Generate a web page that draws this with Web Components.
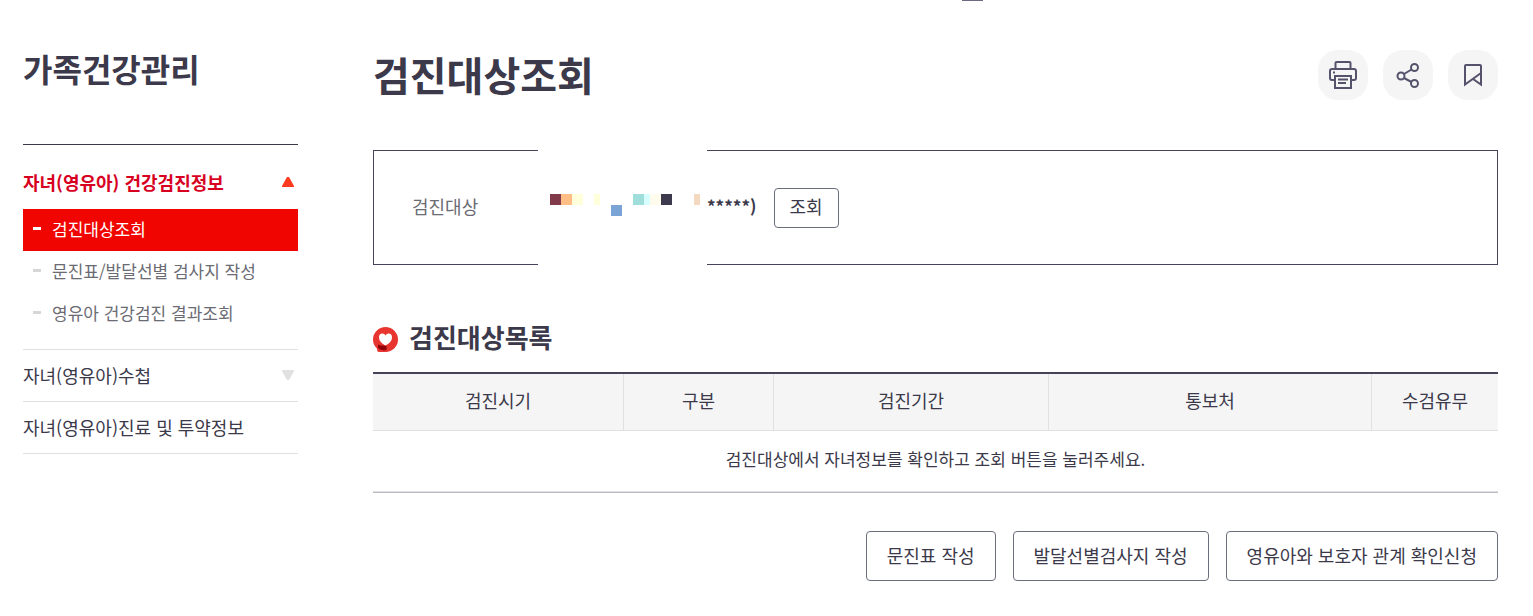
<!DOCTYPE html>
<html lang="ko">
<head>
<meta charset="utf-8">
<title>검진대상조회</title>
<style>
  body {
    margin: 0;
    background: #fff;
    color: #3b394a;
    font: 18px/28px "Noto Sans CJK KR", sans-serif;
  }
</style>
</head>
<body>
<health-page>
  <side-menu slot="side" heading="가족건강관리">
    <menu-group label="자녀(영유아) 건강검진정보" arrow="up" open>
      <menu-entry active>검진대상조회</menu-entry>
      <menu-entry>문진표/발달선별 검사지 작성</menu-entry>
      <menu-entry>영유아 건강검진 결과조회</menu-entry>
    </menu-group>
    <menu-group label="자녀(영유아)수첩" arrow="down"></menu-group>
    <menu-group label="자녀(영유아)진료 및 투약정보"></menu-group>
  </side-menu>

  <page-header>
    검진대상조회
    <tool-button slot="tools" label="인쇄">
      <svg width="50" height="50" fill="none" stroke="#55536b" stroke-width="2">
        <path d="M17.5 18v-5q0-1 1-1h13q1 0 1 1v5"/>
        <path d="M17 30h-3q-2 0-2-2v-7q0-2 2-2h22q2 0 2 2v7q0 2-2 2h-3"/>
        <path d="M17 26h16v12H17z"/>
        <path d="M15 22.5h2M20 29.5h10M20 33h8"/>
      </svg>
    </tool-button>
    <tool-button slot="tools" label="공유">
      <svg width="50" height="50" fill="none" stroke="#55536b" stroke-width="2">
        <circle cx="18" cy="26" r="3.5"/>
        <circle cx="31.5" cy="17.500" r="3.5"/>
        <circle cx="31.5" cy="33.500" r="3.5"/>
        <path d="M21 24l7.5-4.5M21 28l7.5 4"/>
      </svg>
    </tool-button>
    <tool-button slot="tools" label="즐겨찾기">
      <svg width="50" height="50" fill="none" stroke="#55536b" stroke-width="2">
        <path d="M33 23L17 34.5V16q0-1 1-1h14q1 0 1 1v18.5L25 29"/>
      </svg>
    </tool-button>
  </page-header>

  <target-search></target-search>
  <section-title>검진대상목록</section-title>
  <target-table></target-table>

  <button-row>
    <line-button>문진표 작성</line-button>
    <line-button>발달선별검사지 작성</line-button>
    <line-button>영유아와 보호자 관계 확인신청</line-button>
  </button-row>
</health-page>

<script>
function define(name, html, setup) {
  const template = document.createElement('template')
  template.innerHTML = html

  customElements.define(name,
    class extends HTMLElement {

      constructor() {
        super()
        this.attachShadow({ mode: 'open' })
          .appendChild(template.content.cloneNode(true))
        if (setup) setup(this, this.shadowRoot)
      }
    })
}

define('health-page', `
  <style>
    :host { display: block; }
    .handle {
      width: 21px;
      height: 1px;
      margin-left: 962px;
      background: #6c6a80;
    }
    .layout {
      display: flex;
      align-items: flex-start;
      gap: 75px;
      padding: 49px 35px 35px 23px;
    }
    aside { flex: 0 0 275px; }
    main { flex: 1; min-width: 0; }
  </style>
  <div class="handle"></div>
  <div class="layout">
    <aside><slot name="side"></slot></aside>
    <main><slot></slot></main>
  </div>
`)

define('side-menu', `
  <style>
    :host { display: block; }
    h2 {
      margin: 0 0 58px;
      font-size: 32px;
      line-height: 36px;
    }
    nav {
      border-top: 1px solid #3b394a;
    }
  </style>
  <h2></h2>
  <nav><slot></slot></nav>
`, (host, root) => {
  root.querySelector('h2').textContent = host.getAttribute('heading')
})

define('menu-group', `
  <style>
    :host {
      display: block;
      border-bottom: 1px solid #e0e0e0;
    }
    :host([open]) { padding: 12px 0 14px; }
    a {
      display: flex;
      align-items: center;
      justify-content: space-between;
      box-sizing: border-box;
      height: 51px;
      padding: 0 4px 2px 0;
      color: inherit;
      text-decoration: none;
    }
    :host([open]) a {
      height: 52px;
      color: #d8001f;
      font-weight: bold;
    }
    svg { display: none; }
    :host([arrow]) svg { display: block; fill: #e1e1e1; }
    :host([arrow=up]) svg { fill: #ff3a1e; transform: rotate(180deg); }
  </style>
  <a href="#"><span></span><svg width="12" height="10"><path d="M0 0h12v1L7 10H5L0 1z"/></svg></a>
  <slot></slot>
`, (host, root) => {
  root.querySelector('span').textContent = host.getAttribute('label')
})

define('menu-entry', `
  <style>
    :host { display: block; }
    a {
      display: flex;
      align-items: center;
      gap: 11px;
      box-sizing: border-box;
      height: 42px;
      padding: 0 0 3px 10px;
      color: #6b6b73;
      font-size: 17px;
      text-decoration: none;
    }
    a::before {
      content: '';
      width: 8px;
      height: 3px;
      background: #d6d6d6;
    }
    :host([active]) a { background: #f00500; color: #fff; }
    :host([active]) a::before { background: #fff; }
  </style>
  <a href="#"><slot></slot></a>
`)

define('page-header', `
  <style>
    :host {
      display: flex;
      align-items: flex-start;
      justify-content: space-between;
      height: 50px;
      margin-bottom: 50px;
    }
    h1 {
      margin: 0;
      font-size: 40px;
      line-height: 48px;
    }
    .tools { display: flex; gap: 15px; }
  </style>
  <h1><slot></slot></h1>
  <div class="tools"><slot name="tools"></slot></div>
`)

define('tool-button', `
  <style>
    :host { display: block; }
    button {
      display: block;
      width: 50px;
      height: 50px;
      padding: 0;
      border: 0;
      border-radius: 20px;
      background: #f5f5f5;
    }
    ::slotted(svg) { display: block; }
  </style>
  <button type="button"><slot></slot></button>
`, (host, root) => {
  root.querySelector('button').setAttribute('aria-label', host.getAttribute('label'))
})

define('line-button', `
  <style>
    :host { display: block; }
    button {
      display: block;
      height: var(--button-height, 50px);
      padding: 0 var(--button-padding, 20px) 3px;
      border: 1px solid #6b6e7d;
      border-radius: 4px;
      background: #fff;
      color: #3b394a;
      font: inherit;
      white-space: nowrap;
    }
  </style>
  <button type="button"><slot></slot></button>
`)

define('button-row', `
  <style>
    :host {
      display: flex;
      justify-content: flex-end;
      gap: 17px;
      margin-top: 38px;
    }
  </style>
  <slot></slot>
`)

define('target-search', `
  <style>
    :host {
      display: flex;
      align-items: center;
      box-sizing: border-box;
      min-height: 115px;
      padding-left: 38px;
      border: 1px solid #45435a;
    }
    .label, .value { padding-bottom: 4px; }
    .label { width: 126px; color: #6b6b73; }
    /* personal data is covered, box border included */
    .mask {
      align-self: stretch;
      display: flex;
      align-items: center;
      width: 169px;
      margin: -1px 0;
      background: #fff;
    }
    .value { margin-right: 17px; font-size: 17px; font-weight: bold; }
    line-button { --button-height: 40px; --button-padding: 15px; }
  </style>
  <span class="label">검진대상</span>
  <span class="mask">
    <svg width="169" height="29" shape-rendering="crispEdges">
      <path fill="#803a4a" d="M12 1h11v11H12z"/>
      <path fill="#ffbe85" d="M23 1h11v11H23z"/>
      <path fill="#ffffdc" d="M34 1h11v11H34zM56 1h6v11h-6z"/>
      <path fill="#7aa3d6" d="M73 12h11v11H73z"/>
      <path fill="#a0dedc" d="M95 1h11v11H95z"/>
      <path fill="#d8ffff" d="M106 1h6v11h-6z"/>
      <path fill="#fffcee" d="M112 1h11v11h-11z"/>
      <path fill="#3c3a4c" d="M123 1h11v11h-11z"/>
      <path fill="#f5d8c0" d="M156 1h6v11h-6z"/>
    </svg>
  </span>
  <span class="value">*****)</span>
  <line-button>조회</line-button>
`)

define('section-title', `
  <style>
    :host {
      display: flex;
      align-items: center;
      gap: 11px;
      height: 40px;
      margin: 54px 0 13px;
    }
    h3 {
      margin: 0;
      padding-bottom: 4px;
      font-size: 26px;
      line-height: 36px;
    }
  </style>
  <svg width="25" height="25">
    <circle cx="12.5" cy="12.5" r="12.5" fill="#e83530"/>
    <path d="M4 18.5h9.5V25H6q-2 0-2-3z" fill="#e83530"/>
    <path d="M5 17.5q4 2 8.5 1V23Q8 24 5 21z" fill="#8f0008"/>
    <path d="M12.5 18.500Q6 15 6 10.500q0-4 3.500-4 2 0 3 2 1-2 3-2 3.500 0 3.500 4 0 4.500-6.500 8z" fill="#fff"/>
  </svg>
  <h3><slot></slot></h3>
`)

define('target-table', `
  <style>
    :host { display: block; }
    table {
      width: 100%;
      border-top: 2px solid #45435a;
      border-bottom: 1px solid #b9bcc8;
      border-spacing: 0;
      table-layout: fixed;
      text-align: center;
    }
    th, td {
      box-sizing: border-box;
      padding: 0 0 4px;
      border-bottom: 1px solid #e0e0e0;
    }
    th {
      height: 57px;
      background: #f5f5f5;
      font-weight: normal;
    }
    th + th { border-left: 1px solid #e0e0e0; }
    td { height: 61px; font-size: 17px; }
    .time { width: 250px; }
    .kind { width: 150px; }
    .period { width: 275px; }
    .done { width: 127px; }
  </style>
  <table>
    <colgroup>
      <col class="time"><col class="kind"><col class="period"><col><col class="done">
    </colgroup>
    <thead>
      <tr>
        <th scope="col">검진시기</th>
        <th scope="col">구분</th>
        <th scope="col">검진기간</th>
        <th scope="col">통보처</th>
        <th scope="col">수검유무</th>
      </tr>
    </thead>
    <tbody>
      <tr><td colspan="5">검진대상에서 자녀정보를 확인하고 조회 버튼을 눌러주세요.</td></tr>
    </tbody>
  </table>
`)
</script>
</body>
</html>
